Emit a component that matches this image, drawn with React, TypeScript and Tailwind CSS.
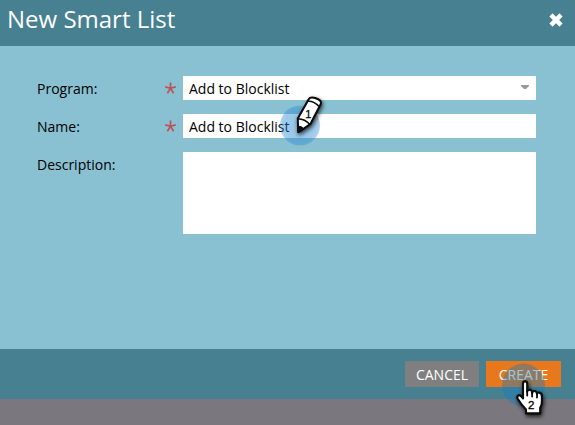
import type { ReactNode } from "react";

function Label({ children, required }: { children: ReactNode; required?: boolean }) {
  return (
    <div className="relative w-[146px] shrink-0 text-[14px] leading-[26px] text-black">
      {children}
      {required && (
        <svg className="absolute left-[128px] top-[6px]" width="11" height="13" viewBox="0 0 11 13" fill="none" stroke="#bc5257" strokeWidth="1.7">
          <path d="M5.5 6.3V0.6M5.5 6.3L0.2 4.9M5.5 6.3L10.8 4.9M5.5 6.3L2.4 11.2M5.5 6.3L8.6 11.2" />
        </svg>
      )}
    </div>
  );
}

function PencilMarker() {
  return (
    <svg className="pointer-events-none absolute left-[270px] top-[85px]" width="70" height="70" viewBox="0 0 70 70">
      <defs>
        <radialGradient id="blueOne">
          <stop offset="0" stopColor="#2385d0" stopOpacity=".5" />
          <stop offset=".85" stopColor="#2385d0" stopOpacity=".42" />
          <stop offset="1" stopColor="#2385d0" stopOpacity=".34" />
        </radialGradient>
        <filter id="shadowOne" x="-50%" y="-50%" width="200%" height="200%">
          <feDropShadow dx="1" dy="2" stdDeviation="2.2" floodColor="#000" floodOpacity=".75" />
        </filter>
      </defs>
      <circle cx="30" cy="40.5" r="20" fill="url(#blueOne)" />
      <g filter="url(#shadowOne)">
        <path d="M28.2 47.3L27.8 33.5L38.7 14.2Q40 11.7 45.2 13Q51.6 15 51 18.5L40.3 39.2Z" fill="#fff" stroke="#080808" strokeWidth="2" strokeLinejoin="round" />
        <path d="M38 16.3Q43.5 15.7 49.5 21.8M27.8 33.8Q35 34 40 39.5" fill="none" stroke="#080808" strokeWidth="1.6" />
        <path d="M28.2 47.3L28 41Q32 41.3 33.8 43.8Z" fill="#080808" stroke="#080808" />
      </g>
      <text x="35.3" y="32.5" fontSize="11" fontFamily="Liberation Sans, sans-serif" fill="#000" stroke="#000" strokeWidth=".25">1</text>
    </svg>
  );
}

function HandMarker() {
  return (
    <svg className="pointer-events-none absolute left-[490px] top-[360px]" width="70" height="65" viewBox="0 0 70 65">
      <defs>
        <filter id="shadowTwo" x="-50%" y="-50%" width="200%" height="200%">
          <feDropShadow dx="1" dy="2" stdDeviation="2.2" floodColor="#000" floodOpacity=".8" />
        </filter>
      </defs>
      <circle cx="33.5" cy="25" r="21.5" fill="#197dbe" fillOpacity=".43" />
      <path
        filter="url(#shadowTwo)"
        d="M33 36.5V23.7Q33 21.4 35 21.4Q37.2 21.4 37.2 23.7V31.5Q37.7 29.8 39.6 29.8Q42 30 42.2 33Q42.6 30.9 44.5 31Q46.7 31.2 47 34Q47.5 32.3 49.2 32.6Q51.8 33 51.9 36.5V42Q51.9 45 50.2 47.5V53.4H36V49.5Q31.5 45 27.5 38.5Q26.7 36 28.7 35.2Q30.5 34.8 33 38.5Z"
        fill="#fff" stroke="#080808" strokeWidth="2.1" strokeLinejoin="round"
      />
      <path d="M37.2 31V35.5M42.1 32.5V36.5M47 34V37.5" stroke="#080808" strokeWidth="1.8" strokeLinecap="round" />
      <text x="38" y="49" fontSize="11.5" fontFamily="Liberation Sans, sans-serif" fill="#000" stroke="#000" strokeWidth=".3">2</text>
    </svg>
  );
}

export default function App() {
  return (
    <div className="relative flex h-[425px] w-[575px] flex-col overflow-hidden bg-[#7a787e] font-['Open_Sans','Noto_Sans',sans-serif]">
      <header className="flex h-[46px] items-center justify-between bg-[#468091] pl-[7px] pr-3 text-white">
        <h1 className="pb-[9px] text-[24px] leading-8">New Smart List</h1>
        <button aria-label="Close" className="pb-[6px]">
          <svg className="block" width="14" height="14" viewBox="0 0 14 14" stroke="#fff" strokeWidth="4.4">
            <path d="M1.9 1.9L12.1 12.1M12.1 1.9L1.9 12.1" />
          </svg>
        </button>
      </header>
      <main className="flex h-[303px] flex-col gap-[14px] bg-[#89c1d3] pl-[37px] pr-[39px] pt-[30px]">
        <div className="flex h-6">
          <Label required>Program:</Label>
          <div className="flex flex-1 items-center justify-between bg-white pl-[6px] pr-[7px] text-[14px] text-black">
            <span className="pt-[2px] leading-6">Add to Blocklist</span>
            <svg className="mb-[2px]" width="8" height="4" viewBox="0 0 8 4"><path d="M0 0H8V1L5 4H3L0 1Z" fill="#999" /></svg>
          </div>
        </div>
        <div className="flex h-6">
          <Label required>Name:</Label>
          <div className="flex-1 bg-white pl-[6px] text-[14px] leading-[26px] text-black">Add to Blocklist</div>
        </div>
        <div className="flex h-[82px]">
          <Label>Description:</Label>
          <div className="flex-1 bg-white" />
        </div>
      </main>
      <footer className="flex h-[50px] justify-end gap-[7px] bg-[#468091] pr-[14px] pt-3 text-[14px] leading-[26px] text-white">
        <button className="h-[26px] w-[74px] bg-[#807f80] pt-px">CANCEL</button>
        <button className="h-[26px] w-[75px] bg-[#e8781b] pt-px">CREATE</button>
      </footer>
      <PencilMarker />
      <HandMarker />
    </div>
  );
}
